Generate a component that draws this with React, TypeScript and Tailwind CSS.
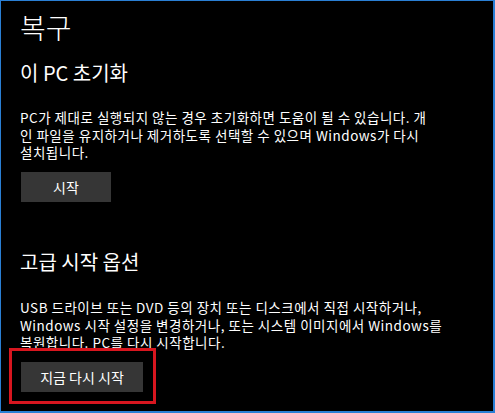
const font = { fontFamily: '"Noto Sans CJK KR", "Noto Sans", sans-serif' };

export default function App() {
  return (
    <div
      className="relative h-[413px] w-[495px] overflow-hidden border-t border-l border-r-2 border-b-2 border-[#2a7fd4] bg-black text-white"
      style={font}
    >
      <div className="pl-[19px]">
        <h1 className="mt-[6px] text-[28px] font-light leading-[40px]">복구</h1>

        <h2 className="mt-[12px] text-[20px] font-normal leading-[28px]">이 PC 초기화</h2>
        <p className="mt-[22px] text-[13.5px] leading-[17.5px] tracking-[0.5px] whitespace-nowrap">
          PC가 제대로 실행되지 않는 경우 초기화하면 도움이 될 수 있습니다. 개
          <br />
          인 파일을 유지하거나 제거하도록 선택할 수 있으며 Windows가 다시
          <br />
          설치됩니다.
        </p>
        <button
          type="button"
          className="mt-[10.5px] ml-px flex h-[30px] w-[90px] items-center justify-center bg-[#363636] text-[14px]"
        >
          시작
        </button>

        <h2 className="mt-[46px] text-[20px] font-normal leading-[28px]">고급 시작 옵션</h2>
        <p className="mt-[23px] text-[13.5px] leading-[17.5px] tracking-[0.5px] whitespace-nowrap">
          USB 드라이브 또는 DVD 등의 장치 또는 디스크에서 직접 시작하거나,
          <br />
          Windows 시작 설정을 변경하거나, 또는 시스템 이미지에서 Windows를
          <br />
          복원합니다. PC를 다시 시작합니다.
        </p>
        <button
          type="button"
          className="mt-[10.5px] ml-px flex h-[30px] w-[122px] items-center justify-center bg-[#363636] text-[14px]"
        >
          지금 다시 시작
        </button>
      </div>

      <div className="absolute left-[8px] top-[347px] h-[56px] w-[147px] border-[3px] border-[#d8161f]" />
    </div>
  );
}
